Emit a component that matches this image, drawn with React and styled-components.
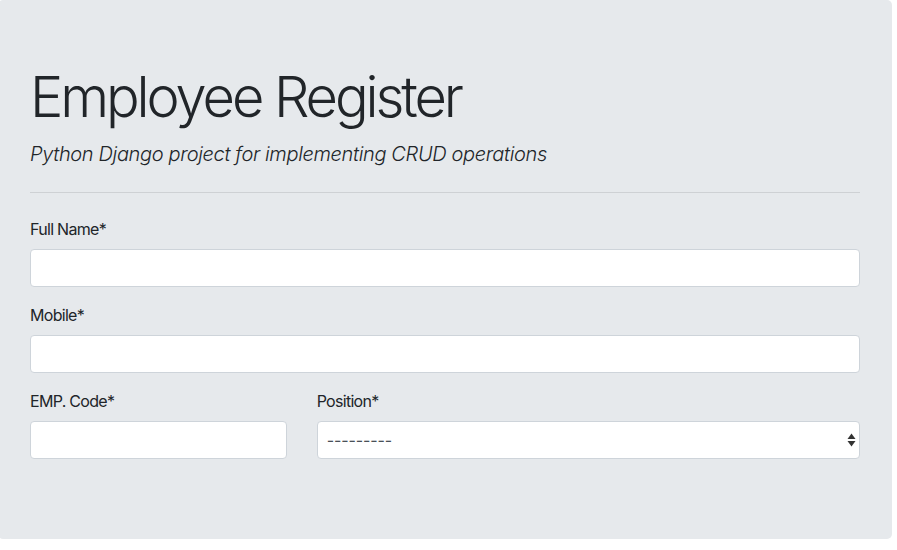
import React from "react";
import styled, { createGlobalStyle } from "styled-components";

const GlobalStyle = createGlobalStyle`
  html, body {
    margin: 0;
    padding: 0;
    background: #ffffff;
  }
  body {
    font-family: Inter, "Noto Sans", "Liberation Sans", sans-serif;
    font-size: 16px;
    line-height: 1.5;
    color: #212529;
  }
  * {
    box-sizing: border-box;
  }
`;

const Jumbotron = styled.div`
  width: 894px;
  margin-left: -2px;
  padding: 64px 32px;
  background: #e6e9ec;
  border-radius: 5px;
`;

const Title = styled.h1`
  margin: 0 0 8px;
  font-size: 56px;
  font-weight: 300;
  line-height: 1.2;
  letter-spacing: -3.1px;
`;

const Lead = styled.p`
  margin: 0;
  font-size: 20px;
  font-weight: 300;
  font-style: italic;
  line-height: 1.5;
  letter-spacing: -0.35px;
`;

const Rule = styled.hr`
  margin: 23px 0 24px;
  border: 0;
  border-top: 1px solid rgba(0, 0, 0, 0.1);
`;

const Row = styled.div`
  display: grid;
  grid-template-columns: ${(p) => p.$cols || "1fr"};
  column-gap: 30px;
`;

const Group = styled.div`
  margin-bottom: 16px;
`;

const Label = styled.label`
  display: block;
  margin-bottom: 8px;
  font-size: 16px;
  font-weight: 400;
  line-height: 24px;
  letter-spacing: -0.7px;
`;

const Input = styled.input`
  display: block;
  width: 100%;
  height: 38px;
  padding: 6px 12px;
  font: inherit;
  color: #495057;
  background: #ffffff;
  border: 1px solid #ced4da;
  border-radius: 4px;
  outline: none;
`;

const SelectWrap = styled.div`
  position: relative;
`;

const Select = styled.select`
  display: block;
  width: 100%;
  height: 38px;
  padding: 6px 28px 6px 9px;
  font-family: Inter, "Liberation Sans", sans-serif;
  font-size: 16px;
  letter-spacing: -0.1px;
  color: #495057;
  background: #ffffff;
  border: 1px solid #ced4da;
  border-radius: 4px;
  appearance: none;
  -webkit-appearance: none;
  outline: none;
`;

const Arrows = styled.svg`
  position: absolute;
  right: 4px;
  top: 12px;
  pointer-events: none;
`;

export default function App() {
  return (
    <>
      <GlobalStyle />
      <Jumbotron>
        <Title>Employee Register</Title>
        <Lead>Python Django project for implementing CRUD operations</Lead>
        <Rule />
        <form>
          <Group>
            <Label>Full Name*</Label>
            <Input type="text" />
          </Group>
          <Group>
            <Label>Mobile*</Label>
            <Input type="text" />
          </Group>
          <Row $cols="256.67px 1fr">
            <Group>
              <Label>EMP. Code*</Label>
              <Input type="text" />
            </Group>
            <Group>
              <Label>Position*</Label>
              <SelectWrap>
                <Select defaultValue="">
                  <option value="">---------</option>
                  <option value="1">Manager</option>
                </Select>
                <Arrows width="9" height="14" viewBox="0 0 9 14">
                  <path d="M4.5 0.5 L8.5 6 H0.5 Z" fill="#333" />
                  <path d="M4.5 13.5 L8.5 8 H0.5 Z" fill="#333" />
                </Arrows>
              </SelectWrap>
            </Group>
          </Row>
        </form>
      </Jumbotron>
    </>
  );
}
